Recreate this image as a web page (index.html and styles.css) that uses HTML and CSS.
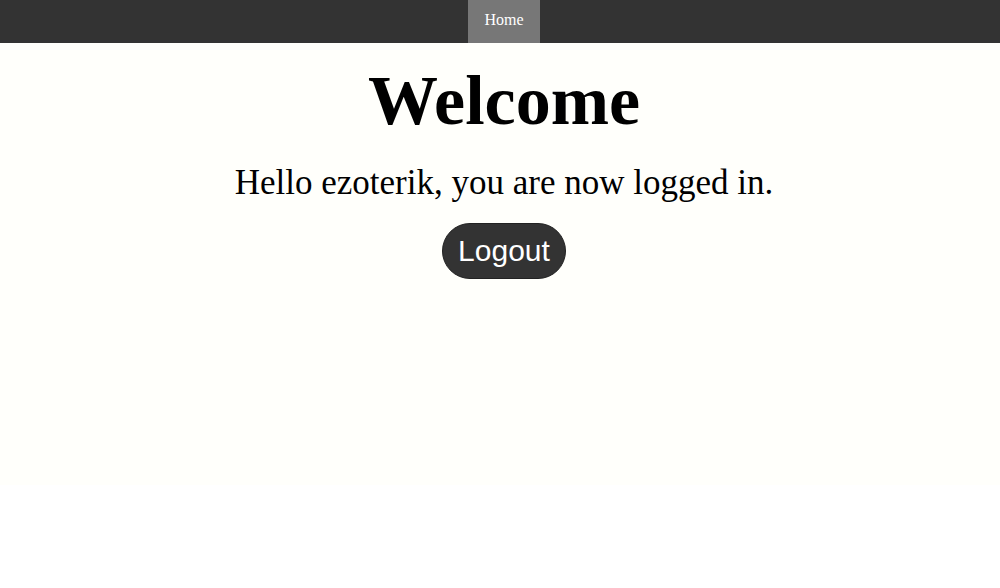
FILE: index.html
```html
<!DOCTYPE html>
<html>
<head>
<meta charset="utf-8">
<link rel="stylesheet" href="styles.css">
</head>
<body>
<div class="page">
  <nav class="nav">
    <a class="nav-link" href="#">Home</a>
  </nav>
  <main class="content">
    <h1 class="title">Welcome</h1>
    <p class="greeting">Hello ezoterik, you are now logged in.</p>
    <button class="logout">Logout</button>
  </main>
</div>
</body>
</html>
```
FILE: styles.css
```css
html, body {
  margin: 0;
  padding: 0;
  background: #ffffff;
}
.page {
  height: 485px;
  background: #fffffb;
  font-family: "Liberation Serif", "Times New Roman", serif;
}
.nav {
  height: 43px;
  padding-left: 8px;
  background: #333333;
  display: flex;
  justify-content: center;
}
.nav-link {
  display: flex;
  align-items: center;
  justify-content: center;
  width: 72px;
  padding-bottom: 3px;
  box-sizing: border-box;
  background: #777777;
  color: #ffffff;
  text-decoration: none;
  font-size: 16px;
}
.content {
  padding-left: 8px;
  display: flex;
  flex-direction: column;
  align-items: center;
}
.title {
  margin: 18px 0 0;
  font-size: 70px;
  line-height: 80px;
  font-weight: bold;
  color: #000;
}
.greeting {
  margin: 22px 0 0;
  font-size: 35px;
  line-height: 40px;
  color: #000;
}
.logout {
  margin-top: 20px;
  height: 56px;
  padding: 0 15px;
  border: 1px solid #222;
  border-radius: 28px;
  background: #333333;
  color: #ffffff;
  font-family: "Liberation Sans", Arial, sans-serif;
  font-size: 30px;
}
```
